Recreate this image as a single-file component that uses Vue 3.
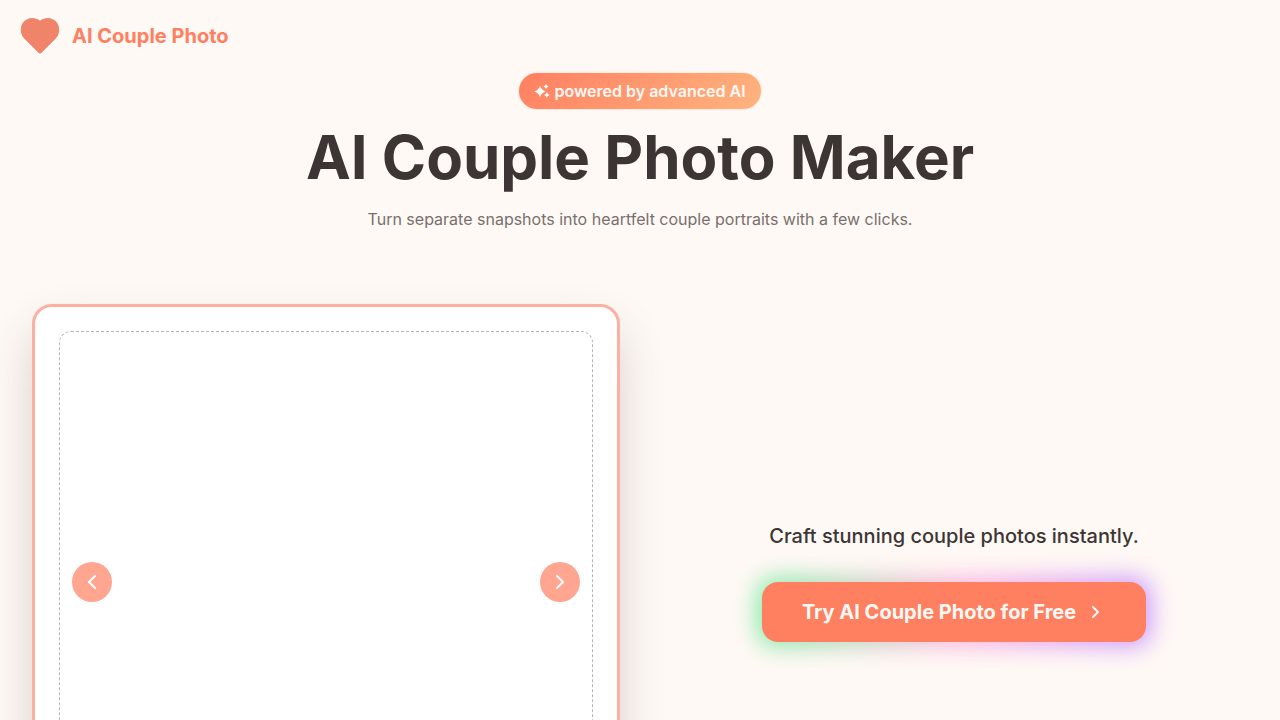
<script setup>
import { ref } from 'vue'

const slide = ref(0)
const step = (amount) => {
  slide.value += amount
}
</script>

<template>
  <div class="page">
    <header class="topbar">
      <a class="brand" href="#">
        <svg class="heart" viewBox="0 0 40 40" aria-hidden="true">
          <path d="M20 37.4C19.3 37.4 18.8 37 18.2 36.4L4.2 22.4C1.8 20 .8 17 .8 13.8.8 7 5.8 2 12.2 2 15.2 2 17.8 3 20 4.8 22.2 3 24.8 2 27.8 2 34.2 2 39.2 7 39.2 13.8 39.2 17 38.2 20 35.8 22.4L21.8 36.4C21.2 37 20.7 37.4 20 37.4Z" />
        </svg>
        <span>AI Couple Photo</span>
      </a>
    </header>

    <main>
      <section class="intro">
        <p class="badge">
          <svg viewBox="0 0 16 16" aria-hidden="true">
            <path d="M6 2.8Q7.4 7.1 11.6 8.5 7.4 9.9 6 14.2 4.6 9.9.4 8.5 4.6 7.1 6 2.8Z" />
            <path d="M12 1Q12.6 2.9 14.5 3.5 12.6 4.1 12 6 11.4 4.1 9.5 3.5 11.4 2.9 12 1Z" />
            <path d="M12.8 9.2Q13.5 11.4 15.7 12.1 13.5 12.8 12.8 15 12.1 12.8 9.9 12.1 12.1 11.4 12.8 9.2Z" />
          </svg>
          <span>powered by advanced AI</span>
        </p>
        <h1>AI Couple Photo Maker</h1>
        <p class="lead">Turn separate snapshots into heartfelt couple portraits with a few clicks.</p>
      </section>

      <section class="showcase">
        <div class="card">
          <div class="frame">
            <button class="arrow" type="button" aria-label="Previous photo" @click="step(-1)">
              <svg viewBox="0 0 24 24" aria-hidden="true"><path d="m15 18-6-6 6-6" /></svg>
            </button>
            <button class="arrow" type="button" aria-label="Next photo" @click="step(1)">
              <svg viewBox="0 0 24 24" aria-hidden="true"><path d="m9 18 6-6-6-6" /></svg>
            </button>
          </div>
        </div>
        <div class="action">
          <p>Craft stunning couple photos instantly.</p>
          <button class="cta" type="button">
            <span>Try AI Couple Photo for Free</span>
            <svg viewBox="0 0 20 20" aria-hidden="true"><path d="m7 5 5 5-5 5" /></svg>
          </button>
        </div>
      </section>
    </main>
  </div>
</template>

<style>
body {
  margin: 0;
  background: #fff9f5;
}
</style>

<style scoped>
.page {
  box-sizing: border-box;
  min-height: 100vh;
  overflow: hidden;
  background: #fff9f5;
  color: #3d3533;
  font-family: Inter, "Liberation Sans", sans-serif;
}

p,
h1 {
  margin: 0;
}

button {
  border: 0;
  font-family: inherit;
  cursor: pointer;
}

.topbar {
  display: flex;
  padding: 16px 20px;
}

.brand {
  display: flex;
  align-items: center;
  gap: 12px;
  color: #ff7f61;
  font-size: 20px;
  font-weight: 700;
  line-height: 28px;
  text-decoration: none;
}

.heart {
  width: 40px;
  height: 40px;
  fill: #f0846a;
}

.intro {
  display: flex;
  flex-direction: column;
  align-items: center;
  text-align: center;
}

.badge {
  display: flex;
  align-items: center;
  gap: 4px;
  margin-top: 1px;
  padding: 6px 15px;
  border-radius: 18px;
  background: linear-gradient(135deg, #ff7f61, #ffb47e);
  box-shadow: 0 0 2px rgb(255 127 97 / 40%);
  color: #fff9f5;
  font-size: 16px;
  font-weight: 600;
  line-height: 24px;
}

.badge svg {
  width: 16px;
  height: 16px;
  fill: currentColor;
}

h1 {
  margin-top: 18px;
  font-size: 60px;
  font-weight: 700;
  line-height: 60px;
}

.lead {
  margin-top: 20px;
  color: #77706d;
  font-size: 16px;
  line-height: 24px;
}

.showcase {
  display: grid;
  grid-template-columns: 1fr 1fr;
  align-items: center;
  gap: 40px;
  padding: 73px 32px 64px;
}

.card {
  padding: 24px;
  border: 3px solid #fbb0a1;
  border-radius: 20px;
  background: #fff;
  box-shadow: 0 24px 48px -4px rgb(61 53 51 / 24%);
}

.frame {
  display: flex;
  align-items: center;
  justify-content: space-between;
  min-height: 500px;
  padding: 0 12px;
  border: 1px dashed #b5b5b8;
  border-radius: 12px;
}

.arrow {
  display: grid;
  place-items: center;
  width: 40px;
  height: 40px;
  padding: 0;
  border-radius: 50%;
  background: #ffa590;
  color: #fff;
}

.arrow svg,
.cta svg {
  width: 24px;
  height: 24px;
  fill: none;
  stroke: currentColor;
  stroke-width: 2;
  stroke-linecap: round;
  stroke-linejoin: round;
}

.action {
  display: flex;
  flex-direction: column;
  align-items: center;
  gap: 32px;
}

.action p {
  font-size: 20px;
  font-weight: 500;
  line-height: 28px;
}

.cta {
  position: relative;
  z-index: 0;
  display: flex;
  align-items: center;
  justify-content: center;
  gap: 10px;
  min-height: 60px;
  padding: 0 40px;
  border-radius: 16px;
  background: none;
  color: #fff9f5;
  font-size: 20px;
  font-weight: 700;
}

.cta::before,
.cta::after {
  content: "";
  position: absolute;
  inset: 0;
  z-index: -1;
  border-radius: 16px;
  background: #ff7f61;
}

.cta::before {
  inset: -4px;
  background: linear-gradient(90deg, #79ed9f, #ffb3dc 50%, #c592ff);
  filter: blur(12px);
}

.cta svg {
  width: 20px;
  height: 20px;
  stroke-width: 2;
}
</style>
